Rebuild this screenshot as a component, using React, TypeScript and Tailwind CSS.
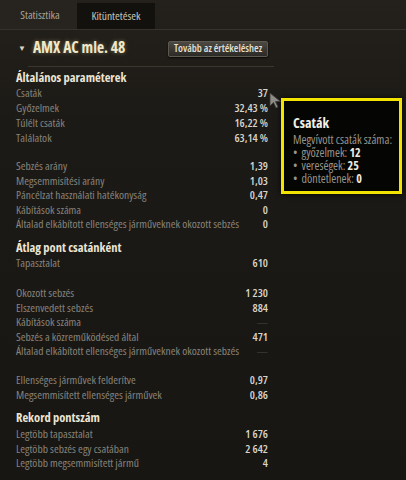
import React from "react";

type Row = { label: string; value: string; dim?: boolean };

const StatRow = ({ label, value, dim, tall }: Row & { tall?: boolean }) => (
  <div className={`flex items-center justify-between whitespace-nowrap ${tall ? "h-[15px]" : "h-[14.5px]"} text-[11.5px] leading-none`}>
    <span className="text-[#86837c]">{label}</span>
    <span className={dim ? "text-[#4a4740]" : "text-[#d8d4ca] font-semibold"}>{value}</span>
  </div>
);

const Heading = ({ children }: { children: React.ReactNode }) => (
  <div className="h-[15px] flex items-center text-[12.5px] font-bold text-[#ebe5d6] leading-none">{children}</div>
);

const Bullet = ({ label, value }: { label: string; value: string }) => (
  <div className="flex gap-[4px]">
    <span>•</span>
    <span>
      {label} <span className="font-bold text-[#eeeae0]">{value}</span>
    </span>
  </div>
);

export default function App() {
  return (
    <div className="relative w-[406px] h-[480px] overflow-hidden font-['Open_Sans',sans-serif] [font-stretch:75%] bg-[#1a1814] bg-[linear-gradient(180deg,#24211c_0px,#1c1a16_120px,#181612_480px)]">
      {/* Tabs */}
      <div className="flex h-[30px] border-b border-[#35312b] text-[11.5px]">
        <div className="w-[77px] pl-[3px] flex items-center justify-center bg-[#27241f] text-[#a7a398]">Statisztika</div>
        <div className="w-[78px] mt-[3px] flex items-center justify-center bg-[#12110e] text-[#c9c5ba]">Kitüntetések</div>
      </div>

      <div className="w-[270px] pl-4 pr-[2px]">
        {/* Title */}
        <div className="flex items-center h-[36px]">
          <span className="text-[8px] text-[#d8d2bf] ml-[2px] mr-[7px]">▼</span>
          <span className="text-[15.5px] font-bold text-[#f1e8c8] [text-shadow:0_0_4px_rgba(240,220,160,0.45)]">AMX AC mle. 48</span>
          <button className="ml-auto mt-[2px] h-[16px] w-[100px] flex items-center justify-center whitespace-nowrap rounded-[2px] border border-[#5d5951] bg-[linear-gradient(180deg,#4c4842,#2c2a26)] text-[10.5px] font-semibold text-[#e4e0d4] shadow-[0_1px_2px_rgba(0,0,0,0.7)]">
            Tovább az értékeléshez
          </button>
        </div>
        <div className="h-px ml-[12px] mr-[-6px] bg-[#3a3630]" />

        <div className="mt-[3.5px]">
          <Heading>Általános paraméterek</Heading>
          <StatRow tall label="Csaták" value="37" />
          <StatRow tall label="Győzelmek" value="32,43 %" />
          <StatRow tall label="Túlélt csaták" value="16,22 %" />
          <StatRow tall label="Találatok" value="63,14 %" />
        </div>

        <div className="mt-[13px]">
          <StatRow label="Sebzés arány" value="1,39" />
          <StatRow label="Megsemmisítési arány" value="1,03" />
          <StatRow label="Páncélzat használati hatékonyság" value="0,47" />
          <StatRow label="Kábítások száma" value="0" />
          <StatRow label="Általad elkábított ellenséges járműveknek okozott sebzés" value="0" />
        </div>

        <div className="mt-[9.5px]">
          <Heading>Átlag pont csatánként</Heading>
          <StatRow tall label="Tapasztalat" value="610" />
        </div>

        <div className="mt-[15.25px]">
          <StatRow label="Okozott sebzés" value="1 230" />
          <StatRow label="Elszenvedett sebzés" value="884" />
          <StatRow label="Kábítások száma" value="—" dim />
          <StatRow label="Sebzés a közreműködésed által" value="471" />
          <StatRow label="Általad elkábított ellenséges járműveknek okozott sebzés" value="—" dim />
        </div>

        <div className="mt-[14.5px]">
          <StatRow label="Ellenséges járművek felderítve" value="0,97" />
          <StatRow label="Megsemmisített ellenséges járművek" value="0,86" />
        </div>

        <div className="mt-[8.75px]">
          <Heading>Rekord pontszám</Heading>
          <div className="mt-[1px]">
            <StatRow label="Legtöbb tapasztalat" value="1 676" />
            <StatRow label="Legtöbb sebzés egy csatában" value="2 642" />
            <StatRow label="Legtöbb megsemmisített jármű" value="4" />
          </div>
        </div>
      </div>

      {/* Tooltip */}
      <div className="absolute left-[281px] top-[98px] w-[121px] h-[96px] border-[3px] border-[#f2e400] bg-[#050504] pl-[9px] pt-[15px] whitespace-nowrap shadow-[0_0_6px_rgba(0,0,0,0.8)]">
        <div className="text-[14px] font-bold text-[#f2efe6] leading-none">Csaták</div>
        <div className="mt-[3px] text-[12px] leading-[13px] text-[#98948b]">
          <div>Megvívott csaták száma:</div>
          <Bullet label="győzelmek:" value="12" />
          <Bullet label="vereségek:" value="25" />
          <Bullet label="döntetlenek:" value="0" />
        </div>
      </div>

      {/* Cursor */}
      <svg className="absolute left-[269px] top-[92px]" width="13" height="17" viewBox="0 0 13 17">
        <path d="M1 1 L1 14 L4.5 10.5 L7 16 L9 15 L6.5 9.5 L11.5 9.5 Z" fill="#8e8c86" stroke="#3a3834" strokeWidth="0.8" />
      </svg>
    </div>
  );
}
